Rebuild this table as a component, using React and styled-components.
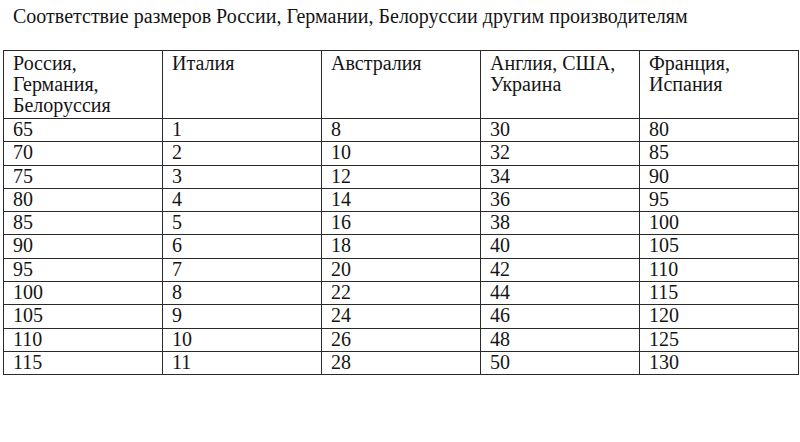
import React from 'react';
import styled, { createGlobalStyle } from 'styled-components';

const GlobalStyle = createGlobalStyle`
  html, body {
    margin: 0;
    padding: 0;
    background: #fff;
  }
  body {
    font-family: "Liberation Serif", "Times New Roman", serif;
    color: #141414;
  }
`;

const Page = styled.div`
  width: 800px;
  height: 442px;
  padding: 5px 0 0 3px;
  box-sizing: border-box;
`;

const Title = styled.div`
  font-size: 20px;
  line-height: 22px;
  padding-left: 10px;
  margin-bottom: 23px;
`;

const Table = styled.table`
  border-collapse: collapse;
  width: 796px;
  table-layout: fixed;
  font-size: 20px;
`;

const Cell = styled.td`
  border: 1px solid #2a2a2a;
  padding: ${p => (p.$head ? '1.6px 9px 1.5px' : '0 9px 2px')};
  line-height: ${p => (p.$head ? '21.3px' : '20.3px')};
  vertical-align: top;
  text-align: left;
  font-weight: normal;
`;

const headers = [
  ['Россия,', 'Германия,', 'Белоруссия'],
  ['Италия'],
  ['Австралия'],
  ['Англия, США,', 'Украина'],
  ['Франция,', 'Испания'],
];

// размеры по столбцам: Россия, Италия, Австралия, Англия, Франция
const rows = Array.from({ length: 11 }, (_, i) => [
  65 + i * 5,
  1 + i,
  8 + i * 2,
  30 + i * 2,
  80 + i * 5,
]);

export default function App() {
  return (
    <>
      <GlobalStyle />
      <Page>
        <Title>Соответствие размеров России, Германии, Белоруссии другим производителям</Title>
        <Table>
          <thead>
            <tr>
              {headers.map((lines, i) => (
                <Cell as="th" $head key={i}>
                  {lines.map((l, j) => (
                    <div key={j}>{l}</div>
                  ))}
                </Cell>
              ))}
            </tr>
          </thead>
          <tbody>
            {rows.map((r, i) => (
              <tr key={i}>
                {r.map((v, j) => (
                  <Cell key={j}>{v}</Cell>
                ))}
              </tr>
            ))}
          </tbody>
        </Table>
      </Page>
    </>
  );
}
